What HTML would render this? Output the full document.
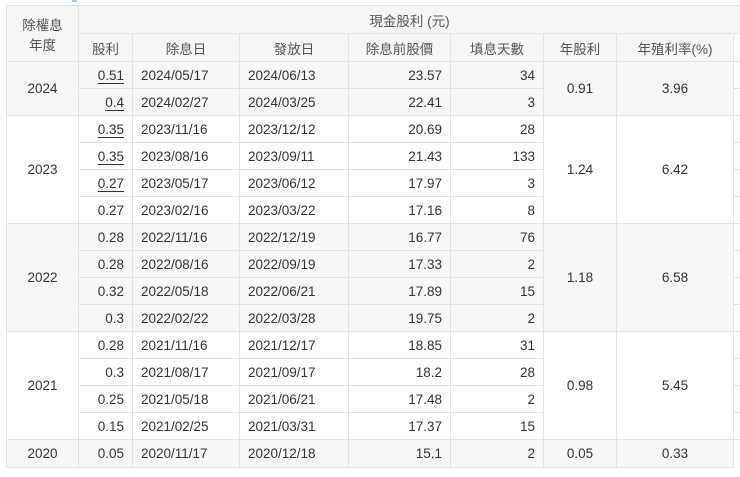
<!DOCTYPE html>
<html><head><meta charset="utf-8"><style>
body{margin:0;background:#fff;font-family:"Liberation Sans","Noto Sans CJK TC",sans-serif;font-size:13.5px;color:#333;}
.mark{position:absolute;left:72px;top:0;width:5px;height:2px;background:#9cc8e8;}
table{position:absolute;left:6px;top:5px;border-collapse:collapse;table-layout:fixed;width:734px;}
td,th{border:1px solid #e3e3e3;padding:0 8px;height:26px;white-space:nowrap;overflow:hidden;}
th{background:#f4f5f6;font-weight:normal;color:#555;height:27px;}
td{text-align:right;}
.c{text-align:center;}
.l{text-align:left;}
.g td{background:#f7f7f7;}
.x{border:none;border-top:1px solid #e3e3e3;background:#fff!important;padding:0;}
u{text-decoration:underline;text-underline-offset:3px;}
tr.last td{height:27px;}
</style></head><body>
<div class="mark"></div>
<table>
<colgroup><col style="width:72px"><col style="width:54px"><col style="width:107px"><col style="width:109px"><col style="width:102px"><col style="width:93px"><col style="width:73px"><col style="width:117px"><col style="width:7px"></colgroup>
<tr><th rowspan="2">除權息<br>年度</th><th colspan="8">現金股利 (元)</th></tr>
<tr><th>股利</th><th>除息日</th><th>發放日</th><th>除息前股價</th><th>填息天數</th><th>年股利</th><th>年殖利率(%)</th><th class="x"></th></tr>
<tr class="g"><td class="c" rowspan="2">2024</td><td><u>0.51</u></td><td class="l">2024/05/17</td><td class="l">2024/06/13</td><td>23.57</td><td>34</td><td class="c" rowspan="2">0.91</td><td class="c" rowspan="2">3.96</td><td class="x"></td></tr>
<tr class="g"><td><u>0.4</u></td><td class="l">2024/02/27</td><td class="l">2024/03/25</td><td>22.41</td><td>3</td><td class="x"></td></tr>
<tr><td class="c" rowspan="4">2023</td><td><u>0.35</u></td><td class="l">2023/11/16</td><td class="l">2023/12/12</td><td>20.69</td><td>28</td><td class="c" rowspan="4">1.24</td><td class="c" rowspan="4">6.42</td><td class="x"></td></tr>
<tr><td><u>0.35</u></td><td class="l">2023/08/16</td><td class="l">2023/09/11</td><td>21.43</td><td>133</td><td class="x"></td></tr>
<tr><td><u>0.27</u></td><td class="l">2023/05/17</td><td class="l">2023/06/12</td><td>17.97</td><td>3</td><td class="x"></td></tr>
<tr><td>0.27</td><td class="l">2023/02/16</td><td class="l">2023/03/22</td><td>17.16</td><td>8</td><td class="x"></td></tr>
<tr class="g"><td class="c" rowspan="4">2022</td><td>0.28</td><td class="l">2022/11/16</td><td class="l">2022/12/19</td><td>16.77</td><td>76</td><td class="c" rowspan="4">1.18</td><td class="c" rowspan="4">6.58</td><td class="x"></td></tr>
<tr class="g"><td>0.28</td><td class="l">2022/08/16</td><td class="l">2022/09/19</td><td>17.33</td><td>2</td><td class="x"></td></tr>
<tr class="g"><td>0.32</td><td class="l">2022/05/18</td><td class="l">2022/06/21</td><td>17.89</td><td>15</td><td class="x"></td></tr>
<tr class="g"><td>0.3</td><td class="l">2022/02/22</td><td class="l">2022/03/28</td><td>19.75</td><td>2</td><td class="x"></td></tr>
<tr><td class="c" rowspan="4">2021</td><td>0.28</td><td class="l">2021/11/16</td><td class="l">2021/12/17</td><td>18.85</td><td>31</td><td class="c" rowspan="4">0.98</td><td class="c" rowspan="4">5.45</td><td class="x"></td></tr>
<tr><td>0.3</td><td class="l">2021/08/17</td><td class="l">2021/09/17</td><td>18.2</td><td>28</td><td class="x"></td></tr>
<tr><td>0.25</td><td class="l">2021/05/18</td><td class="l">2021/06/21</td><td>17.48</td><td>2</td><td class="x"></td></tr>
<tr><td>0.15</td><td class="l">2021/02/25</td><td class="l">2021/03/31</td><td>17.37</td><td>15</td><td class="x"></td></tr>
<tr class="g last"><td class="c">2020</td><td>0.05</td><td class="l">2020/11/17</td><td class="l">2020/12/18</td><td>15.1</td><td>2</td><td class="c">0.05</td><td class="c">0.33</td><td class="x"></td></tr>
</table>
</body></html>
